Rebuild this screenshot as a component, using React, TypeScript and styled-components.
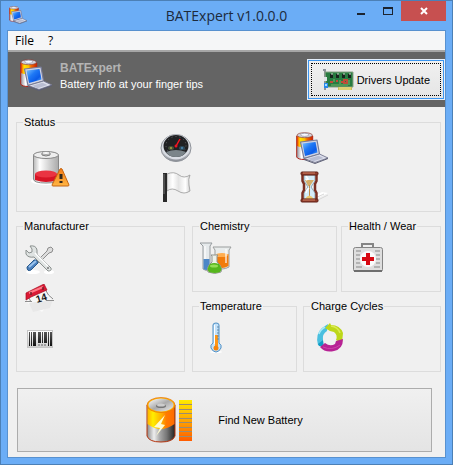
import React from "react";
import styled, { createGlobalStyle } from "styled-components";

const GlobalStyle = createGlobalStyle`
  *, *::before, *::after { box-sizing: border-box; }
  body { margin: 0; font-family: "Liberation Sans", Arial, sans-serif; font-size: 11px; line-height: 14px; color: #000; }
  button { font: inherit; color: inherit; cursor: default; }
  svg { display: block; flex: none; }
`;

const Window = styled.div`
  display: flex;
  flex-direction: column;
  min-height: 100vh;
  padding: 0 6px 6px;
  background: #6badf6;
  border: 1px solid #4c80b6;
`;

const TitleBar = styled.header`
  display: grid;
  grid-template-columns: 1fr auto 1fr;
  height: 29px;
`;

const TitleIcon = styled.span`
  padding: 5px 0 0 2px;
`;

const Title = styled.h1`
  margin: 0;
  padding-top: 4px;
  font: 400 14px/22px "Open Sans", "Noto Sans", sans-serif;
  color: #1c2a3c;
  white-space: nowrap;
`;

const Controls = styled.div`
  display: flex;
  justify-content: flex-end;
  align-items: flex-start;
`;

const ControlButton = styled.button<{ $close?: boolean }>`
  display: flex;
  align-items: center;
  justify-content: center;
  width: ${(p) => (p.$close ? "45px" : "26px")};
  height: 20px;
  padding: 0;
  border: 0;
  background: ${(p) => (p.$close ? "#c75050" : "transparent")};
`;

const Client = styled.div`
  display: flex;
  flex-direction: column;
  flex: 1;
  background: #f0f0f0;
  border: 1px solid #5891cf;
`;

const MenuBar = styled.nav`
  display: flex;
  height: 21px;
  background: #f5f6f7;
  border-bottom: 2px solid #a6a6a6;
`;

const MenuItem = styled.button`
  padding: 0 7px;
  border: 0;
  background: transparent;
  font: 12px/18px "Open Sans", "Noto Sans", sans-serif;
`;

const Banner = styled.section`
  display: flex;
  align-items: flex-start;
  padding: 7px 0 7px 12px;
  background: #646464;
`;

const BannerText = styled.div`
  flex: 1;
  padding: 1px 0 0 8px;
  line-height: 16px;
  color: #fff;
`;

const AppName = styled.h2`
  margin: 0;
  font-size: 12px;
  color: #b4b4b4;
`;

const Tagline = styled.p`
  margin: 0;
`;

const DriversButton = styled.button`
  height: 41px;
  padding: 2px;
  border: 2px solid #3c96f0;
  outline: 1px solid #e4eefa;
  outline-offset: -1px;
  background: linear-gradient(#f0f0f0, #e5e5e5);
`;

const FocusFrame = styled.span`
  display: flex;
  align-items: center;
  gap: 3px;
  height: 100%;
  padding: 0 10px;
  border: 1px dotted #000;
`;

const Body = styled.main`
  display: flex;
  flex-direction: column;
  flex: 1;
  gap: 7px;
  padding: 8px 4px 5px 8px;
`;

const Group = styled.fieldset<{ $pad: string }>`
  min-width: 0;
  margin: 0;
  padding: ${(p) => p.$pad};
  border: 1px solid #dcdcdc;
`;

const Caption = styled.legend<{ $inset: number }>`
  margin-left: ${(p) => 6 - p.$inset}px;
  padding: 0 1px;
  white-space: nowrap;
`;

const StatusGrid = styled.div`
  display: grid;
  grid-template-columns: 129fr 136fr 144fr;
  gap: 7px 0;
`;

const Charge = styled.div`
  grid-row: span 2;
  align-self: center;
`;

const Columns = styled.div<{ $cols: string; $gap: number }>`
  display: grid;
  grid-template-columns: ${(p) => p.$cols};
  gap: ${(p) => p.$gap}px;
`;

const PanelColumn = styled.div`
  display: grid;
  gap: 7px;
`;

const IconStack = styled.div`
  display: grid;
  gap: 9px;
`;

const FindButton = styled.button`
  display: flex;
  align-items: center;
  justify-content: center;
  gap: 24px;
  min-height: 64px;
  margin: 9px 9px 0 1px;
  padding: 0;
  border: 1px solid #acacac;
  background: linear-gradient(#f0f0f0, #e4e4e4);
`;

const LaptopBattery = ({ size = 32, id }: { size?: number; id: string }) => (
  <svg width={size} height={size} viewBox="0 0 32 32" aria-hidden="true">
    <defs>
      <linearGradient id={`${id}b`}><stop offset="0" stopColor="#d83000" /><stop offset=".1" stopColor="#ff9000" /><stop offset=".2" stopColor="#ffe400" /><stop offset=".48" stopColor="#ffc400" /><stop offset=".65" stopColor="#f56a00" /><stop offset="1" stopColor="#c82400" /></linearGradient>
      <linearGradient id={`${id}m`}><stop offset="0" stopColor="#8d8d98" /><stop offset=".3" stopColor="#fff" /><stop offset="1" stopColor="#888794" /></linearGradient>
      <linearGradient id={`${id}s`} x2="1" y2="1"><stop offset="0" stopColor="#7ec4ff" /><stop offset=".4" stopColor="#1e78f5" /><stop offset=".7" stopColor="#0b5be8" /><stop offset="1" stopColor="#5ab4ff" /></linearGradient>
    </defs>
    <path d="M.7 4v21q1 2.500 8 2.500t8-2.500V4z" fill={`url(#${id}m)`} stroke="#b02418" />
    <path d="M1 4v10q4 2 8 0l7.500-2V4z" fill={`url(#${id}b)`} />
    <ellipse cx="8.700" cy="3.200" rx="7.700" ry="2.500" fill="#d4d4dc" stroke="#8c4038" strokeWidth=".7" />
    <ellipse cx="8.700" cy="2.800" rx="4" ry="1.600" fill="#f8f8ff" stroke="#8f8f9d" strokeWidth=".7" />
    <path d="M4.500 10L21 8l2.500 14L8 26.500z" fill="#d0d3e2" stroke="#777b98" strokeWidth="1.200" strokeLinejoin="round" />
    <path d="M6.500 11.500L19.500 10l2 10.500L9 24z" fill={`url(#${id}s)`} />
    <path d="M8 26.500L23.500 22l8.500 4-13 4.500z" fill="#dddfeb" stroke="#73768f" strokeWidth=".9" strokeLinejoin="round" />
    <path d="M12 26.800l10.500-3 5 2.200-10 3.200z" fill="#b9bdd2" />
    <path d="M8 27.500l11 4 13-5" fill="none" stroke="#5d5f75" />
  </svg>
);

const CardIcon = () => (
  <svg width="32" height="22" viewBox="0 0 32 22" aria-hidden="true">
    <path d="M1 1h2v20" fill="none" stroke="#8c9198" strokeWidth="2" />
    <path d="M3 3h28v15H4z" fill="#287c41" stroke="#8aa286" />
    <path d="M16 18h14v3H16z" fill="#c8bd58" />
    <path d="M18 18v3m2-3v3m2-3v3m2-3v3m2-3v3m2-3v3" stroke="#f2e68c" />
    <path d="M8 5h3v4H8zm6 0h3v4h-3zm6 0h3v4h-3zm6 0h3v4h-3z" fill="#17251d" />
    <path d="M9 5h2m4 0h2m4 0h2m4 0h2" stroke="#d6dfd4" />
    <path d="M8 13h3m3-1h2m3 1h2m1-2h3v3h-3z" fill="none" stroke="#c04c38" strokeWidth="2" />
    <path d="M9 16h17M12 10v3m6-2v4m9-4v5" stroke="#75b66c" />
    <path d="M2 8h3v4H2z" fill="#dfe4e6" />
    <path d="M2 14h4v5H2z" fill="#2788ec" /><path d="M3 15h2v2H3z" fill="#a5dcff" />
  </svg>
);

const LowBatteryIcon = () => (
  <svg width="40" height="40" viewBox="0 0 40 40" aria-hidden="true">
    <defs>
      <linearGradient id="glass"><stop stopColor="#b8b8b8" /><stop offset=".25" stopColor="#fff" /><stop offset=".65" stopColor="#d0d0d0" /><stop offset="1" stopColor="#aaa" /></linearGradient>
      <linearGradient id="warn" y2="1" x2="0"><stop stopColor="#f47b16" /><stop offset="1" stopColor="#ffb543" /></linearGradient>
    </defs>
    <ellipse cx="16" cy="33" rx="16" ry="4" fill="#fff" />
    <path d="M2.500 7v24q0 4 12.500 4t12.500-4V7z" fill="url(#glass)" stroke="#888" />
    <path d="M4 26q11-5 22 0v6q-11 4-22 0z" fill="#d61425" />
    <ellipse cx="15" cy="26" rx="11" ry="3.500" fill="#ea3442" />
    <ellipse cx="15" cy="7" rx="12.500" ry="3.500" fill="#eee" stroke="#858585" />
    <path d="M11 5v2q4 2 8 0V5z" fill="#ddd" stroke="#777" /><ellipse cx="15" cy="5" rx="4" ry="1.500" fill="#fafafa" stroke="#888" strokeWidth=".7" />
    <path d="M29 21q1-1 2 0l7 16q0 1-1 1H22q-1 0-1-1z" fill="url(#warn)" stroke="#c56510" strokeLinejoin="round" />
    <path d="M30 26v5m0 2v2" stroke="#33291e" strokeWidth="3" />
  </svg>
);

const GaugeIcon = () => (
  <svg width="32" height="32" viewBox="0 0 32 32" aria-hidden="true">
    <defs><linearGradient id="rim" x2="0" y2="1"><stop stopColor="#777" /><stop offset=".5" stopColor="#e7e9ed" /><stop offset="1" stopColor="#888c94" /></linearGradient></defs>
    <ellipse cx="16" cy="16" rx="15" ry="13.500" fill="url(#rim)" stroke="#8e9299" />
    <ellipse cx="16" cy="15" rx="14" ry="12.500" fill="#d9dde4" />
    <ellipse cx="16" cy="14" rx="12.500" ry="11" fill="#202123" />
    <ellipse cx="16" cy="13.500" rx="10" ry="9" fill="none" stroke="#707378" strokeDasharray="1 3" strokeWidth=".8" />
    <path d="M6 20q10-4 20 0-3 5-10 5t-10-5z" fill="#7b858a" />
    <ellipse cx="11" cy="16" rx="3" ry="2" fill="#44523c" /><circle cx="11" cy="16" r="1" fill="#a7a43b" />
    <ellipse cx="22" cy="16" rx="3" ry="2" fill="#2c4a5b" /><circle cx="22" cy="16" r="1" fill="#4b8ab6" />
    <path d="M16 14l4-7" stroke="#ff1320" strokeWidth="1.500" /><circle cx="16" cy="14" r="1.500" fill="#ee1420" />
  </svg>
);

const FlagIcon = () => (
  <svg width="32" height="32" viewBox="0 0 32 32" aria-hidden="true">
    <defs><linearGradient id="cloth"><stop stopColor="#e2e2e2" /><stop offset=".25" stopColor="#fff" /><stop offset=".5" stopColor="#e4e4e4" /><stop offset=".8" stopColor="#fff" /><stop offset="1" stopColor="#d0d0d0" /></linearGradient></defs>
    <path d="M7 3q7-3 12 1t11 0q-2 4-1 10l1 6q-6 4-12 0t-11 0z" fill="url(#cloth)" stroke="#999" strokeWidth=".8" />
    <path d="M3 2h4v29H3z" fill="#292929" /><path d="M4 3v20" stroke="#777" />
  </svg>
);

const HourglassIcon = () => (
  <svg width="36" height="32" viewBox="0 0 36 32" aria-hidden="true">
    <path d="M18 29l14-7-6-1-11 6z" fill="#fff" /><path d="M20 30l12-6m-15 4l11-5" stroke="#d8d8d8" />
    <path d="M8 4h11v6l-4 6 4 6v6H8v-6l4-6-4-6z" fill="#d5ecf8" stroke="#8da9b6" />
    <path d="M9 9h9l-4 6h-2z" fill="#d5ae69" /><path d="M13.500 14v13" stroke="#bf8e4f" /><path d="M9 28q4-7 9 0z" fill="#edca70" />
    <path d="M10 5l2 3-2 1m0 13l1-3 2-2" fill="none" stroke="#fff" strokeWidth="1.500" />
    <path d="M6.500 4v6L8 13v6l-1.500 3v6M20.500 4v6L19 13v6l1.500 3v6" fill="none" stroke="#7c3023" strokeWidth="2.500" />
    <rect x="5" y="1" width="17" height="3" rx="1" fill="#94402e" stroke="#602117" /><rect x="5" y="28" width="17" height="3" rx="1" fill="#913d2a" stroke="#602117" />
    <path d="M7 2h12M7 29h12" stroke="#cf8064" />
  </svg>
);

const ToolsIcon = () => (
  <svg width="30" height="30" viewBox="0 0 30 30" aria-hidden="true">
    <ellipse cx="8" cy="27" rx="7" ry="2" fill="#fff" /><ellipse cx="24" cy="27" rx="5" ry="2" fill="#fff" />
    <path d="M12 16L22 6l1-3 3-1 2 2-1 3-3 1-10 10z" fill="#ddd" stroke="#777" strokeWidth=".8" />
    <path d="M2 22l7-7q3-1 4 3l-7 7q-4 2-4-3z" fill="#4b80bd" stroke="#275789" /><path d="M4 22l7-6" stroke="#9bc3ec" strokeWidth="2" />
    <path d="M1 5l3 3 3-1V4L5 1q6-1 7 4v4l14 14q1 3-3 3L9 12q-6 1-8-3z" fill="#dfe3e2" stroke="#8b918f" />
    <path d="M10 8l13 13" stroke="#fff" strokeWidth="1.500" /><circle cx="23" cy="23" r="1" fill="#777" />
  </svg>
);

const CalendarIcon = () => (
  <svg width="30" height="30" viewBox="0 0 30 30" aria-hidden="true">
    <path d="M1 18l16 10 11-14z" fill="#fafafa" /><path d="M4 19l4 9 17-4 3-9z" fill="#e8e8e8" />
    <path d="M3 11l18-7 7 11-5 2-17 1H1l3-4z" fill="#f6f6f6" />
    <path d="M20 5q3 7 8 10M3 12l3 6" fill="none" stroke="#888" />
    <path d="M1 9L19 0l3 6-16 7-5 3z" fill="#db1934" stroke="#a50c20" strokeWidth=".7" /><path d="M4 9l14-6" stroke="#ff7a87" strokeWidth="2" />
    <path d="M6 8v3m12-8v3" stroke="#74202b" strokeWidth="1.500" />
    <text x="12" y="19" fontFamily="Liberation Sans" fontSize="10" fontWeight="bold" transform="rotate(-17 12 19)" fill="#151515">14</text>
    <path d="M0 17.500h7m14-1h8" stroke="#8d8d8d" />
  </svg>
);

const BarcodeIcon = () => (
  <svg width="30" height="30" viewBox="0 0 30 30" aria-hidden="true">
    <defs><linearGradient id="paper" x2="0" y2="1"><stop stopColor="#fff" /><stop offset="1" stopColor="#ccc" /></linearGradient><linearGradient id="ink" x2="0" y2="1"><stop stopColor="#555" /><stop offset="1" stopColor="#111" /></linearGradient></defs>
    <rect x="2.500" y="7.500" width="25" height="17" fill="url(#paper)" stroke="#c5c5c5" />
    <path d="M4 9h1v14H4zm2 0h1v14H6zm2 0h3v14H8zm5 0h3v11h-3zm4 0h1v11h-1zm2 0h3v11h-3zm4 0h1v14h-1zm2 0h2v14h-2z" fill="url(#ink)" />
    <path d="M13 22h8" stroke="#666" strokeDasharray="2 1" />
  </svg>
);

const FlasksIcon = () => (
  <svg width="34" height="32" viewBox="0 0 34 32" aria-hidden="true">
    <path d="M13 5h18l-2 3v17q-7 4-14 0V8z" fill="#e8ecec" stroke="#9b9e9e" /><path d="M16 14q6 2 12.500-2v12q-6.500 4-12.500 0z" fill="#f17c0c" /><ellipse cx="22" cy="13" rx="6" ry="2" fill="#ffae50" />
    <path d="M0 1h12l-2 3v23q-4 3-7 0V4z" fill="#e6eaec" stroke="#969b9e" /><path d="M3.500 17h6v10q-3 2-6 0z" fill="#4c87c7" /><path d="M5 4v13" stroke="#fff" strokeWidth="1.500" opacity=".8" />
    <path d="M11 13h7l-1 1v6q6 5 4 10-6 3-13 0-2-5 4-10v-6z" fill="#edf1e9" stroke="#90948e" /><path d="M10 22q4-2 9 0 4 5 1 8-5 2-11 0-3-3 1-8z" fill="#56b61d" /><ellipse cx="14" cy="24" rx="4" ry="1.500" fill="#94de56" />
    <path d="M26 7v14" stroke="#fff" opacity=".6" strokeWidth="2" />
  </svg>
);

const FirstAidIcon = () => (
  <svg width="32" height="32" viewBox="0 0 32 32" aria-hidden="true">
    <path d="M10 5V2h11v3" fill="none" stroke="#858585" strokeWidth="2" /><rect x="1.500" y="5.500" width="29" height="24" rx="2" fill="#dedede" stroke="#858585" />
    <path d="M2 29h28" stroke="#6e6e6e" strokeWidth="2" />
    <path d="M4 9h5m14 0h5M4 13h4m16 0h4M4 17h4m16 0h4M4 21h4m16 0h4M4 25h6m12 0h6" stroke="#a5a5a5" strokeWidth="1.500" />
    <circle cx="16" cy="17" r="8" fill="#fafafa" /><path d="M14 11h4v4h4v4h-4v4h-4v-4h-4v-4h4z" fill="#d70812" />
  </svg>
);

const ThermometerIcon = () => (
  <svg width="32" height="32" viewBox="0 0 32 32" aria-hidden="true">
    <ellipse cx="16" cy="30" rx="6" ry="1" fill="#fff" /><path d="M13 3q0-2 3-2t3 2v18q3 2 2 5-2 4-5 4t-5-4q-1-3 2-5z" fill="#c4e2fa" stroke="#4f8fc4" />
    <path d="M15 13h3v11h-3z" fill="#ff9616" /><circle cx="16" cy="26" r="2.500" fill="#f5830b" /><path d="M14.500 3v19" stroke="#fff" /><path d="M17 5h2m-2 3h2m-2 3h2m-2 3h2m-2 3h2" stroke="#6388a7" />
  </svg>
);

const CyclesIcon = () => (
  <svg width="32" height="32" viewBox="0 0 32 32" aria-hidden="true">
    <path d="M4 23Q1 12 8 6l6-4-1 7q-5 3-4 9l-1 6z" fill="#4abfdf" /><path d="M4 22l5-4 1 7-5-1z" fill="#129bc5" />
    <path d="M11 6l5-5 1 2q9 0 12 8l-1 10-6-3q2-5-2-8l-4-1z" fill="#bdd719" /><path d="M17 4q7 1 9 7" stroke="#dcea52" strokeWidth="1.500" fill="none" />
    <path d="M29 17q0 10-9 12-9 2-14-4l5-4q5 4 10 1l1-3z" fill="#b72294" /><path d="M9 25q9 4 17-2" stroke="#cc42aa" fill="none" /><path d="M5 12q1-4 6-7" stroke="#a6eaf7" strokeWidth="1.500" fill="none" />
  </svg>
);

const BatteryLevelIcon = () => (
  <svg width="48" height="48" viewBox="0 0 48 48" aria-hidden="true">
    <defs>
      <linearGradient id="cell"><stop stopColor="#ffb000" /><stop offset=".2" stopColor="#ffee00" /><stop offset=".55" stopColor="#ffa800" /><stop offset=".7" stopColor="#ff7a00" /><stop offset="1" stopColor="#ff6a00" /></linearGradient>
      <linearGradient id="steel"><stop stopColor="#888" /><stop offset=".25" stopColor="#eee" /><stop offset=".45" stopColor="#aaa" /><stop offset=".7" stopColor="#777" /><stop offset="1" stopColor="#222" /></linearGradient>
      <linearGradient id="lid" x2="1" y2="1"><stop stopColor="#fff" /><stop offset=".5" stopColor="#aaa" /><stop offset="1" stopColor="#eee" /></linearGradient>
      <linearGradient id="levels" x2="0" y2="1"><stop stopColor="#ffeb00" /><stop offset=".5" stopColor="#ffa500" /><stop offset="1" stopColor="#ff5c00" /></linearGradient>
    </defs>
    <path d="M1 9v31q2 6 14 6t14-6V9z" fill="url(#steel)" stroke="#b5330d" /><path d="M1.500 9v19q13 10 27 0V9z" fill="url(#cell)" />
    <ellipse cx="15" cy="9" rx="14" ry="7.500" fill="#ffb000" stroke="#e87000" strokeWidth=".7" /><ellipse cx="15" cy="9" rx="12.500" ry="6.500" fill="url(#lid)" /><ellipse cx="15" cy="10" rx="5" ry="2" fill="#777" /><ellipse cx="15" cy="9" rx="4" ry="1.500" fill="#ccc" />
    <path d="M19 19L8 31l6 1-4 8 9-11-4-1z" fill="#fffbd2" />
    <path d="M33 4h13v41H33z" fill="url(#levels)" /><path d="M33 8.500h13M33 13.500h13M33 17.500h13M33 22.500h13M33 26.500h13M33 31.500h13M33 35.500h13M33 40.500h13" stroke="#9a8b73" />
  </svg>
);

type PanelProps = { title: string; top: number; left: number; bottom?: number; children: React.ReactNode };

const Panel = ({ title, top, left, bottom = 17, children }: PanelProps) => (
  <Group $pad={`${top}px 0 ${bottom}px ${left}px`}>
    <Caption $inset={left}>{title}</Caption>
    {children}
  </Group>
);

export default function App() {
  return (
    <>
      <GlobalStyle />
      <Window>
        <TitleBar>
          <TitleIcon><LaptopBattery id="t" size={18} /></TitleIcon>
          <Title>BATExpert v1.0.0.0</Title>
          <Controls>
            <ControlButton aria-label="Minimize"><svg width="10" height="10"><path d="M0 8h8" stroke="#1c2430" strokeWidth="2" /></svg></ControlButton>
            <ControlButton aria-label="Maximize"><svg width="10" height="10"><path d="M.5 1v8M9.500 1v8M0 8.500h10" stroke="#1c2430" /><path d="M0 2h10" stroke="#1c2430" strokeWidth="2" /></svg></ControlButton>
            <ControlButton $close aria-label="Close"><svg width="8" height="8"><path d="M1 1l6 6m0-6l-6 6" stroke="#fff" strokeWidth="2" /></svg></ControlButton>
          </Controls>
        </TitleBar>
        <Client>
          <MenuBar><MenuItem>File</MenuItem><MenuItem>?</MenuItem></MenuBar>
          <Banner>
            <LaptopBattery id="h" />
            <BannerText><AppName>BATExpert</AppName><Tagline>Battery info at your finger tips</Tagline></BannerText>
            <DriversButton><FocusFrame><CardIcon />Drivers Update</FocusFrame></DriversButton>
          </Banner>
          <Body>
            <Panel title="Status" top={3} left={14} bottom={8}>
              <StatusGrid>
                <Charge><LowBatteryIcon /></Charge>
                <GaugeIcon /><LaptopBattery id="p" />
                <FlagIcon /><HourglassIcon />
              </StatusGrid>
            </Panel>
            <Columns $cols="169fr 249fr" $gap={7}>
              <Panel title="Manufacturer" top={12} left={8}>
                <IconStack><ToolsIcon /><CalendarIcon /><BarcodeIcon /></IconStack>
              </Panel>
              <PanelColumn>
                <Columns $cols="145fr 100fr" $gap={4}>
                  <Panel title="Chemistry" top={9} left={7}><FlasksIcon /></Panel>
                  <Panel title="Health / Wear" top={9} left={10}><FirstAidIcon /></Panel>
                </Columns>
                <Columns $cols="105fr 138fr" $gap={6}>
                  <Panel title="Temperature" top={9} left={7}><ThermometerIcon /></Panel>
                  <Panel title="Charge Cycles" top={9} left={10}><CyclesIcon /></Panel>
                </Columns>
              </PanelColumn>
            </Columns>
            <FindButton><BatteryLevelIcon />Find New Battery</FindButton>
          </Body>
        </Client>
      </Window>
    </>
  );
}
